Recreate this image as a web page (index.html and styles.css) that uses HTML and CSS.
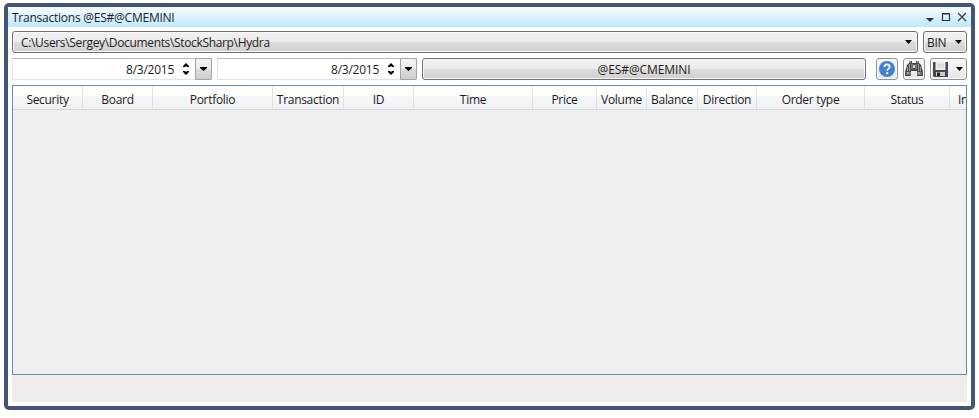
FILE: index.html
```html
<!DOCTYPE html>
<html lang="en">
<head>
<meta charset="utf-8">
<title>Transactions @ES#@CMEMINI</title>
<link rel="stylesheet" href="styles.css">
</head>
<body>
<main class="window">
  <header class="titlebar">
    <span class="title">Transactions @ES#@CMEMINI</span>
    <svg class="window-controls" width="42" height="12" viewBox="0 0 42 12">
      <path d="M0 7h8L4 11z" fill="#333"/>
      <path d="M16.5 2.5h7v7h-7zM16 3h8" fill="none" stroke="#333" stroke-width="1.2"/>
      <path d="M32 2l8 8M40 2l-8 8" stroke="#444" stroke-width="1.4"/>
    </svg>
  </header>
  <div class="content">
    <div class="row path-row">
      <div class="button path"><span class="path-text">C:\Users\Sergey\Documents\StockSharp\Hydra</span><svg class="arrow" width="7" height="4" viewBox="0 0 7 4"><path d="M0 0h7L3.5 4z"/></svg></div>
      <div class="button format"><span>BIN</span><svg class="arrow" width="7" height="4" viewBox="0 0 7 4"><path d="M0 0h7L3.5 4z"/></svg></div>
    </div>
    <div class="row filters">
      <div class="date"><span>8/3/2015</span><svg class="spinner" width="8" height="14" viewBox="0 0 8 14"><path d="M1 4l3-3 3 3v1H5L4 4 3 5H1zM1 10l3 3 3-3V9H5l-1 1-1-1H1z"/></svg><div class="drop"><svg width="7" height="4" viewBox="0 0 7 4"><path d="M0 0h7v1L3.5 4 0 1z"/></svg></div></div>
      <div class="date"><span>8/3/2015</span><svg class="spinner" width="8" height="14" viewBox="0 0 8 14"><path d="M1 4l3-3 3 3v1H5L4 4 3 5H1zM1 10l3 3 3-3V9H5l-1 1-1-1H1z"/></svg><div class="drop"><svg width="7" height="4" viewBox="0 0 7 4"><path d="M0 0h7v1L3.5 4 0 1z"/></svg></div></div>
      <div class="button security"><span>@ES#@CMEMINI</span></div>
      <div class="button tool">
        <svg width="16" height="16" viewBox="0 0 16 16"><circle cx="8" cy="8" r="8" fill="#3f83cc"/><path d="M5.4 6.1C5.4 4.2 6.5 3.4 8 3.4s2.7.9 2.7 2.4C10.7 7.6 8.2 7.7 8.2 9.8" fill="none" stroke="#fff" stroke-width="1.7"/><circle cx="8.2" cy="12.2" r="1.15" fill="#fff"/></svg>
      </div>
      <div class="button tool">
        <svg width="18" height="16" viewBox="0 0 18 16"><path d="M4 0h3v2h4V0h3v2l2 2 2 7v4h-6v-5H6v5H0v-4l2-7 2-2z" fill="#4a4a4a"/><path d="M4.5 3v7M7 3v5M11 3v5M13.5 3v7M2.5 6v4M15.5 6v4" stroke="#aaa" stroke-width=".9"/><path d="M8 4h2v3H8z" fill="#ccc"/><path d="M1 11h5v3H1zm11 0h5v3h-5z" fill="#707070"/><path d="M2 12h2M13 12h2M4 1h2M12 1h2" stroke="#ccc"/></svg>
      </div>
      <div class="button save">
        <svg width="15" height="15" viewBox="0 0 15 15"><path d="M0 0h15v15H1l-1-1z" fill="#44474e"/><path d="M2.5 0h10v8h-10z" fill="#e8eaec"/><path d="M4 3h7M4 5h7" stroke="#cfcfcf"/><path d="M3 10h9v4H3z" fill="#c8cbd0"/><path d="M4 10.5h3V14H4z" fill="#222"/></svg>
        <svg class="arrow" width="7" height="4" viewBox="0 0 7 4"><path d="M0 0h7L3.5 4z"/></svg>
      </div>
    </div>
    <section class="table">
      <div class="columns">
        <span>Security</span><span>Board</span><span>Portfolio</span><span>Transaction</span><span>ID</span><span>Time</span><span>Price</span><span>Volume</span><span>Balance</span><span>Direction</span><span>Order type</span><span>Status</span><span class="last">In</span>
      </div>
    </section>
    <footer class="statusbar"></footer>
  </div>
</main>
</body>
</html>
```
FILE: styles.css
```css
* { box-sizing: border-box; }
body {
  margin: 0;
  padding: 3px 4px 8px;
  height: 418px;
  overflow: hidden;
  background: #fff;
  color: #1c1c1c;
  font: 12px/16px "Open Sans", "Noto Sans", sans-serif;
}
svg { display: block; flex: none; }
.window {
  width: 971px;
  height: 407px;
  border: 4px solid #425579;
  border-radius: 5px;
  background: #fff;
}
.titlebar {
  display: flex;
  align-items: center;
  justify-content: space-between;
  height: 20px;
  padding: 0 4px;
  background: linear-gradient(#f8fdff, #bde8fb);
}
.title { padding-top: 2px; letter-spacing: -0.24px; }
.window-controls { margin-right: -1px; }
.content { padding: 4px; }
.row { display: flex; height: 22px; margin-bottom: 5px; }
.path-row { gap: 5px; }
.button {
  display: flex;
  align-items: center;
  height: 22px;
  border: 1px solid #707070;
  border-radius: 3px;
  background: linear-gradient(#f2f2f2 0%, #ebebeb 50%, #dddddd 50%, #cfcfcf 100%);
  box-shadow: inset 0 0 0 1px #f8f8f8;
}
.button span, .date span { padding-top: 2px; }
.path { width: 906px; padding: 0 5px 0 8px; justify-content: space-between; }
.path-text { letter-spacing: -0.34px; }
.format { width: 44px; padding: 0 4px 0 3px; justify-content: space-between; letter-spacing: -0.3px; }
.date {
  display: flex;
  align-items: center;
  justify-content: flex-end;
  width: 200px;
  height: 22px;
  margin-right: 5px;
  border: 1px solid #e0e2e9;
  border-top-color: #b8bbc5;
  border-right: 0;
  letter-spacing: -0.25px;
}
.spinner { margin: 0 5px 0 8px; }
.drop {
  display: flex;
  align-items: center;
  justify-content: center;
  width: 17px;
  height: 22px;
  border: 1px solid #a5a5a5;
  border-radius: 0 2px 2px 0;
  background: linear-gradient(#f3f3f3 0%, #ebebeb 50%, #dddddd 50%, #cfcfcf 100%);
}
.security { width: 444px; margin-right: 10px; justify-content: center; letter-spacing: -0.1px; }
.tool { width: 22px; margin-right: 5px; justify-content: center; }
.tool, .save {
  border-color: #929292;
  background: linear-gradient(#f7f7f7, #e7e7e7);
}
.save { width: 37px; padding: 0 3px 0 2px; justify-content: space-between; }
.table {
  height: 290px;
  border: 1px solid #688caf;
  background: #f0f0f0;
}
.columns {
  display: grid;
  grid-template-columns: 70px 70px 120px 71px 70px 119px 64px 50px 51px 59px 108px 85px 16px;
  height: 24px;
  overflow: hidden;
  border-bottom: 1px solid #d5d5d5;
  background: linear-gradient(#fff 0%, #fff 42%, #f6f7f8 42%, #f1f2f4 100%);
  letter-spacing: -0.3px;
}
.columns span {
  padding-top: 6px;
  border-right: 1px solid #dfe1e4;
  text-align: center;
  white-space: nowrap;
  overflow: hidden;
}
.columns .last { padding-left: 8px; border: 0; text-align: left; }
.statusbar { height: 27px; background: #f0eceb; }
```
